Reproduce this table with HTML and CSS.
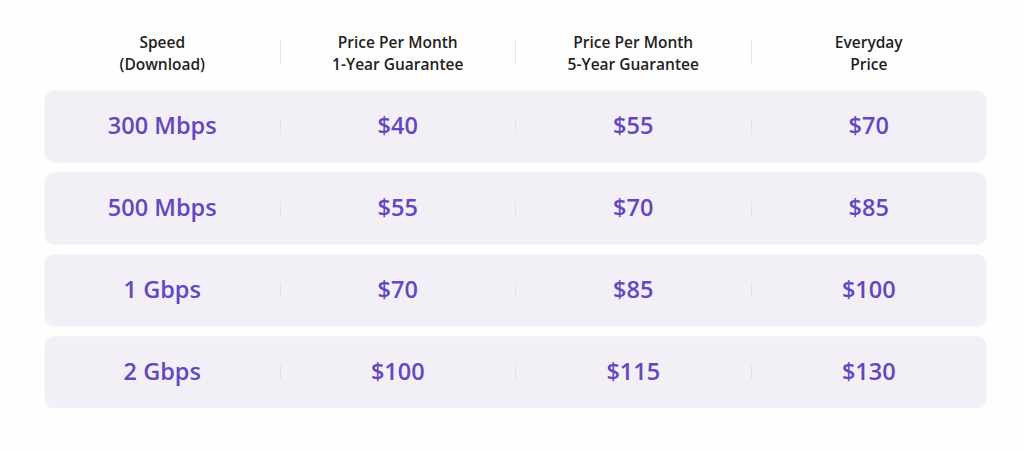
FILE: index.html
```html
<!DOCTYPE html>
<html lang="en">
<head>
<meta charset="utf-8">
<link rel="stylesheet" href="styles.css">
</head>
<body>
<div class="pricing">
  <div class="head">
    <div class="hcell">Speed<br>(Download)</div>
    <span class="hdiv"></span>
    <div class="hcell">Price Per Month<br>1-Year Guarantee</div>
    <span class="hdiv"></span>
    <div class="hcell">Price Per Month<br>5-Year Guarantee</div>
    <span class="hdiv"></span>
    <div class="hcell">Everyday<br>Price</div>
  </div>
  <div class="rows">
    <div class="row">
      <div class="cell">300 Mbps</div><span class="rdiv"></span>
      <div class="cell">$40</div><span class="rdiv"></span>
      <div class="cell">$55</div><span class="rdiv"></span>
      <div class="cell">$70</div>
    </div>
    <div class="row">
      <div class="cell">500 Mbps</div><span class="rdiv"></span>
      <div class="cell">$55</div><span class="rdiv"></span>
      <div class="cell">$70</div><span class="rdiv"></span>
      <div class="cell">$85</div>
    </div>
    <div class="row">
      <div class="cell">1 Gbps</div><span class="rdiv"></span>
      <div class="cell">$70</div><span class="rdiv"></span>
      <div class="cell">$85</div><span class="rdiv"></span>
      <div class="cell">$100</div>
    </div>
    <div class="row">
      <div class="cell">2 Gbps</div><span class="rdiv"></span>
      <div class="cell">$100</div><span class="rdiv"></span>
      <div class="cell">$115</div><span class="rdiv"></span>
      <div class="cell">$130</div>
    </div>
  </div>
</div>
</body>
</html>
```
FILE: styles.css
```css
html, body {
  margin: 0;
  padding: 0;
  background: #fefefe;
}
body {
  font-family: "Open Sans", "Liberation Sans", sans-serif;
}
.pricing {
  width: 941px;
  padding: 30px 0 0 45px;
}
.head {
  display: grid;
  grid-template-columns: 1fr 1px 1fr 1px 1fr 1px 1fr;
  align-items: center;
  height: 45px;
  margin-bottom: 16px;
}
.hcell {
  text-align: center;
  font-size: 15.5px;
  line-height: 22px;
  font-weight: 600;
  color: #1f1f23;
}
.hdiv {
  display: block;
  width: 1px;
  height: 25px;
  background: #e6e3ef;
}
.rows {
  display: flex;
  flex-direction: column;
  gap: 11px;
}
.row {
  display: grid;
  grid-template-columns: 1fr 1px 1fr 1px 1fr 1px 1fr;
  align-items: center;
  height: 71px;
  background: #f2f0f6;
  border-radius: 9px;
  box-shadow: 0 0 0 1px #f6f5f9;
}
.cell {
  text-align: center;
  font-size: 23.5px;
  line-height: 28px;
  padding-bottom: 3px;
  font-weight: 600;
  color: #6446c0;
}
.rdiv {
  display: block;
  width: 1px;
  height: 15px;
  background: #e4e0ee;
}
```
